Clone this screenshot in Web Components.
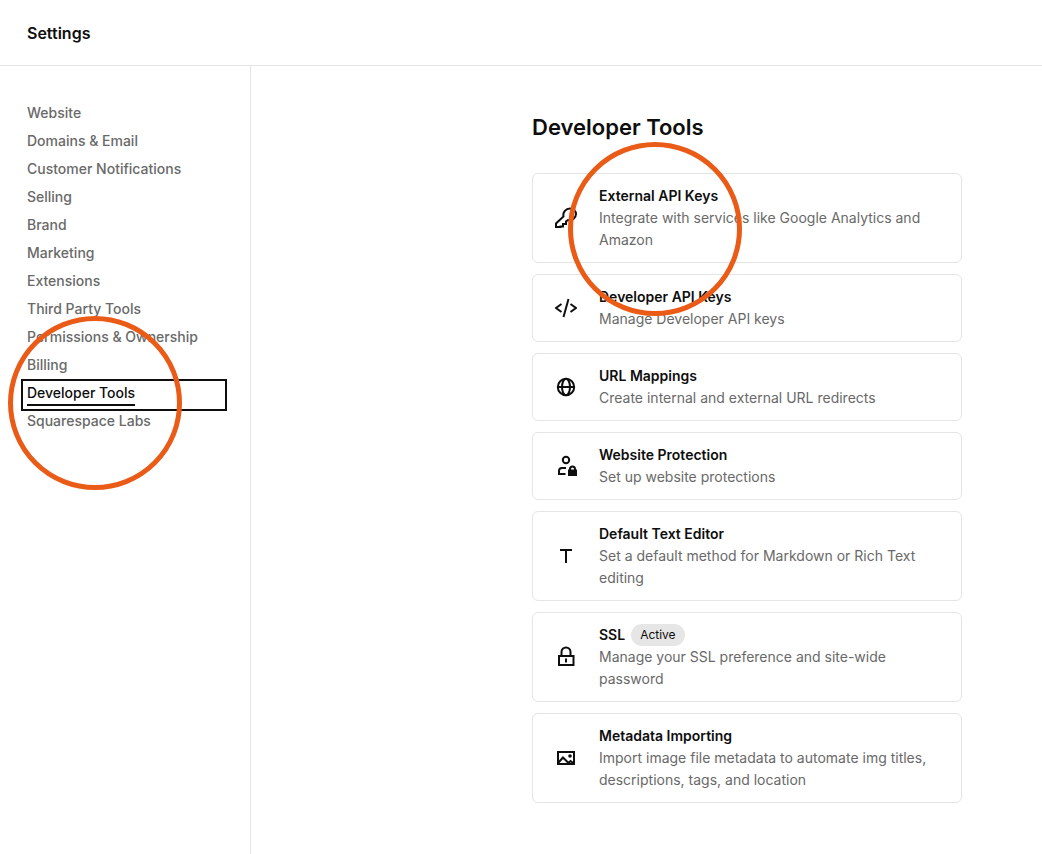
<!DOCTYPE html>
<html lang="en">
<head>
<meta charset="utf-8">
<meta name="viewport" content="width=device-width, initial-scale=1">
<title>Settings</title>
<style>
body { margin: 0; background: #fff; color: #0e0e0e; font-family: Inter, "Liberation Sans", sans-serif; font-size: 14px; }
</style>
</head>
<body>
<settings-page>
  <settings-nav slot="nav">
    <nav-item href="#website">Website</nav-item>
    <nav-item href="#domains">Domains &amp; Email</nav-item>
    <nav-item href="#notifications">Customer Notifications</nav-item>
    <nav-item href="#selling">Selling</nav-item>
    <nav-item href="#brand">Brand</nav-item>
    <nav-item href="#marketing">Marketing</nav-item>
    <nav-item href="#extensions">Extensions</nav-item>
    <nav-item href="#third-party">Third Party Tools</nav-item>
    <nav-item href="#permissions">Permissions &amp; Ownership</nav-item>
    <nav-item href="#billing">Billing</nav-item>
    <nav-item href="#developer" active>Developer Tools<highlight-ring slot="mark" style="--x:-13px;--y:-63px"></highlight-ring></nav-item>
    <nav-item href="#labs">Squarespace Labs</nav-item>
  </settings-nav>
  <tool-list heading="Developer Tools">
    <tool-card icon="key" heading="External API Keys">Integrate with services like Google Analytics and Amazon<highlight-ring slot="mark" style="--x:36px;--y:-31px"></highlight-ring></tool-card>
    <tool-card icon="code" heading="Developer API Keys">Manage Developer API keys</tool-card>
    <tool-card icon="globe" heading="URL Mappings">Create internal and external URL redirects</tool-card>
    <tool-card icon="person" heading="Website Protection">Set up website protections</tool-card>
    <tool-card icon="text" heading="Default Text Editor">Set a default method for Markdown or Rich Text editing</tool-card>
    <tool-card icon="lock" heading="SSL"><status-badge slot="badge">Active</status-badge>Manage your SSL preference and site-wide password</tool-card>
    <tool-card icon="image" heading="Metadata Importing">Import image file metadata to automate img titles, descriptions, tags, and location</tool-card>
  </tool-list>
</settings-page>
<script>
const define = (name, html, setup) => {
  const template = document.createElement('template');
  template.innerHTML = html;
  customElements.define(name, class extends HTMLElement {
    constructor() {
      super();
      this.attachShadow({ mode: 'open' }).append(template.content.cloneNode(true));
    }
    connectedCallback() { if (setup) setup(this, this.shadowRoot); }
  });
};

const icons = {
  key: '<path d="M1 20v-3.500l7.500-7C7.500 5 11 1.500 15 1.500c3.500 0 6 2.500 6 5.500 0 4-4 7-8 6l-2 1.500V17H8v2.500H5.500V20z"/><path d="M15.500 5.500l2 2"/>',
  code: '<path d="M6.500 7L1 11l5.500 4M15.500 7l5.500 4-5.500 4M13.500 2l-5 18"/>',
  globe: '<circle cx="11" cy="11" r="8.200"/><ellipse cx="11" cy="11" rx="4" ry="8.200"/><path d="M2.500 11h17"/>',
  person: '<circle cx="11" cy="5" r="3.200"/><path d="M11 13H7c-2 0-3 1.500-3 3v3h6.500"/><path class="solid" d="M14 14.500V14a3.500 3.500 0 0 1 7 0v.500h1V21h-9v-6.500zm2 0h3V14a1.500 1.500 0 0 0-3 0z" fill-rule="evenodd"/>',
  text: '<path d="M5 5h12M11 5v13"/>',
  lock: '<path d="M4 10h14.500v9H4zM6.500 10V6a4.500 4.500 0 0 1 9 0v4M11 12.500v4"/>',
  image: '<path d="M3 5h16v12H3z"/><path d="M3.500 15.500L8 10.500l5.500 5.500 2-2 3.500 2.500"/><circle class="solid" cx="15" cy="9" r="1.800"/>'
};

define('highlight-ring', `
<style>
  :host { position: absolute; left: var(--x); top: var(--y); width: 174px; height: 174px; box-sizing: border-box;
    border: 5px solid #ea5b17; border-radius: 50%; pointer-events: none; z-index: 2; }
</style>`);

define('status-badge', `
<style>
  :host { display: inline-block; padding: 0 9px; border-radius: 11px; background: #e6e6e6; color: #0e0e0e;
    font-size: 12px; font-weight: 400; line-height: 22px; }
</style>
<slot></slot>`);

define('nav-item', `
<style>
  :host { display: block; position: relative; }
  a { display: block; position: relative; padding: 0 6px; color: #696969; font-weight: 500; line-height: 28px; text-decoration: none; }
  :host([active]) a { color: #0e0e0e; }
  :host([active]) a::after { content: ""; position: absolute; inset: 0 0 -4px; border: 2px solid #0e0e0e; }
  span { display: inline-block; }
  :host([active]) span { box-shadow: inset 0 -2px #0e0e0e; line-height: 26px; }
</style>
<a><span><slot></slot></span></a><slot name="mark"></slot>`, (host, root) => {
  const link = root.querySelector('a');
  link.href = host.getAttribute('href');
  if (host.hasAttribute('active')) link.setAttribute('aria-current', 'page');
});

define('settings-nav', `
<style>
  :host { display: block; }
  nav { padding: 33px 23px 33px 21px; }
</style>
<nav aria-label="Settings"><slot></slot></nav>`);

define('tool-card', `
<style>
  :host { display: block; position: relative; }
  article { display: flex; align-items: center; gap: 22px; padding: 11px 22px; border: 1px solid #e5e5e5; border-radius: 6px; line-height: 22px; }
  svg { flex: none; width: 22px; height: 22px; fill: none; stroke: #0e0e0e; stroke-width: 2; }
  .solid { fill: #0e0e0e; stroke: none; }
  .title { display: flex; gap: 6px; }
  h2 { margin: 0; font-size: 14px; font-weight: 600; }
  p { margin: 0; color: #696969; }
</style>
<article>
  <svg viewBox="0 0 22 22" aria-hidden="true"></svg>
  <div><div class="title"><h2></h2><slot name="badge"></slot></div><p><slot></slot></p></div>
</article><slot name="mark"></slot>`, (host, root) => {
  root.querySelector('svg').innerHTML = icons[host.getAttribute('icon')];
  root.querySelector('h2').textContent = host.getAttribute('heading');
});

define('tool-list', `
<style>
  :host { display: block; }
  h1 { margin: 0 0 29px; font-size: 22px; font-weight: 600; line-height: 34px; }
  section { display: grid; gap: 11px; }
</style>
<h1></h1><section><slot></slot></section>`, (host, root) => {
  root.querySelector('h1').textContent = host.getAttribute('heading');
});

define('settings-page', `
<style>
  :host { display: flex; flex-direction: column; min-height: 100vh; }
  header { padding: 22px 27px 21px; border-bottom: 1px solid #e5e5e5; font-size: 16px; font-weight: 600; line-height: 22px; }
  .body { flex: 1; display: grid; grid-template-columns: 251px 1fr; }
  aside { border-right: 1px solid #e5e5e5; }
  main { display: grid; grid-template-columns: minmax(0, 430px); justify-content: end; align-content: start; padding: 44px 80px; }
</style>
<header>Settings</header>
<div class="body">
  <aside><slot name="nav"></slot></aside>
  <main><slot></slot></main>
</div>`);
</script>
</body>
</html>
